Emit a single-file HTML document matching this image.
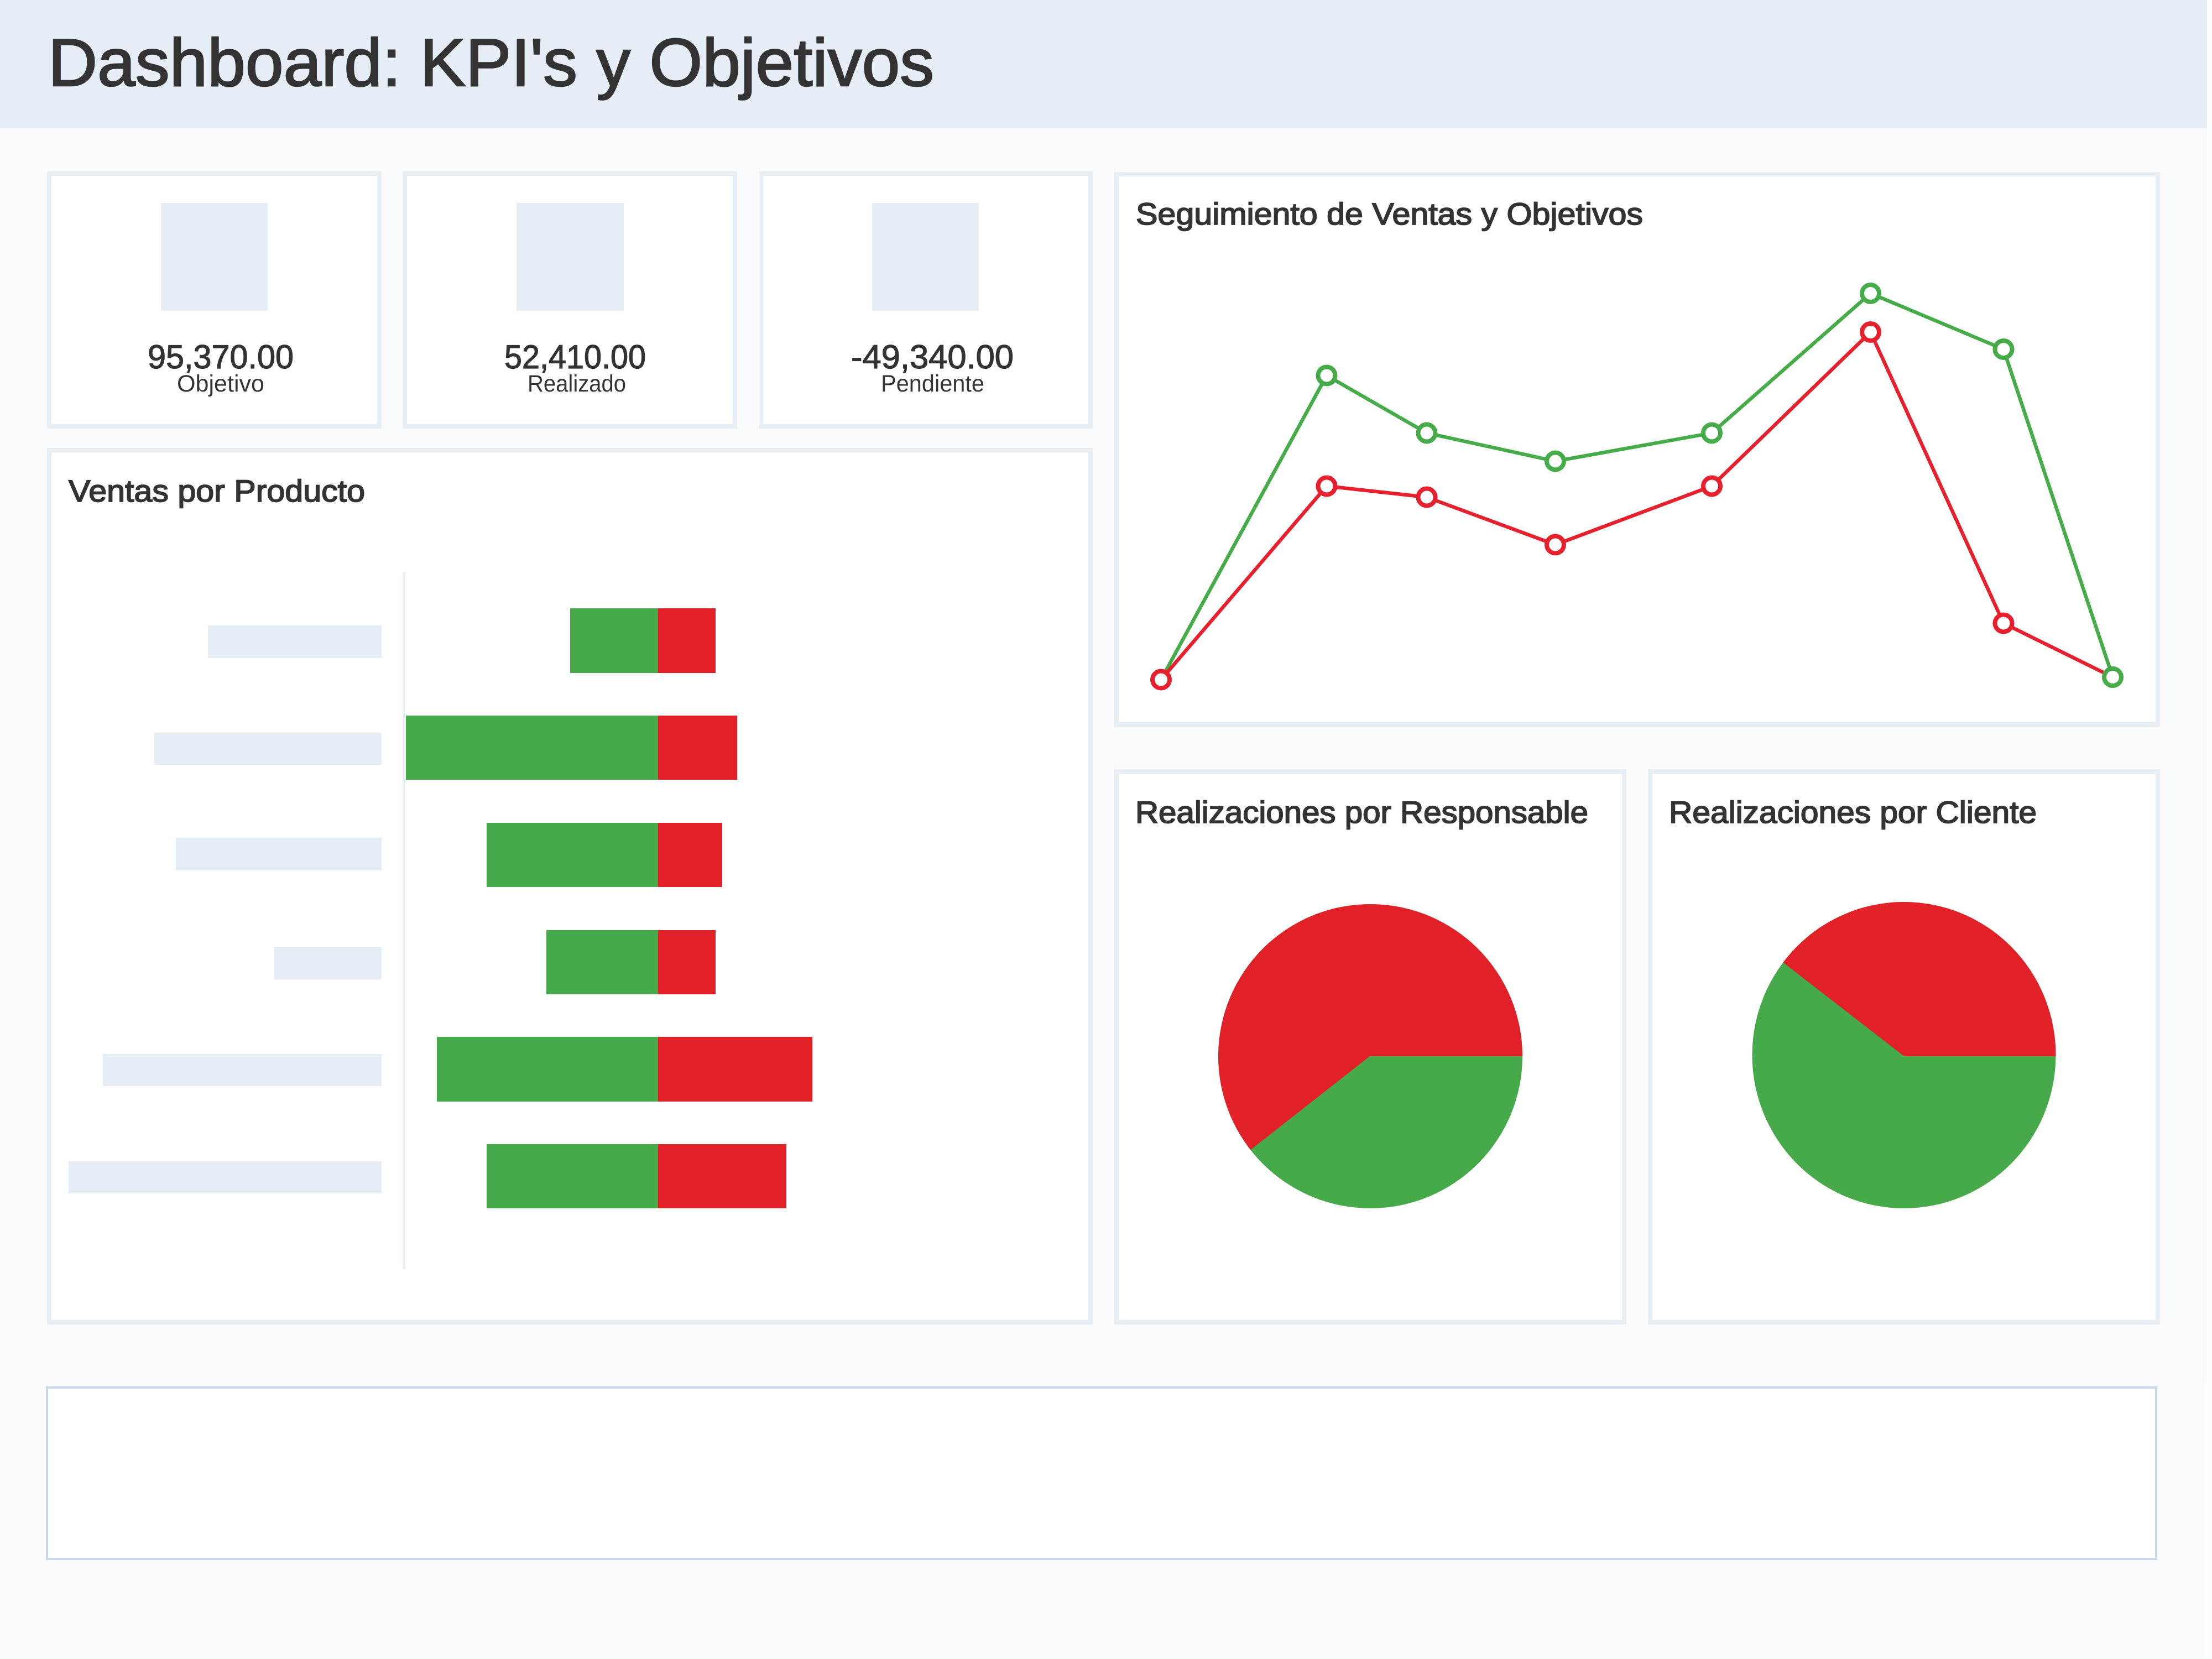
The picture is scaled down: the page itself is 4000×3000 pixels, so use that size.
<!DOCTYPE html>
<html lang="es"><head><meta charset="utf-8"><title>Dashboard: KPI's y Objetivos</title>
<style>
html,body{margin:0;padding:0;width:4000px;height:3000px;overflow:hidden;background:#fff}
svg{display:block;position:absolute;left:0;top:0}
text{font-family:"Liberation Sans",sans-serif;fill:#333}
.t{font-size:56px;stroke:#333;stroke-width:1.8px}
.n{font-size:60px;stroke:#333;stroke-width:1.2px}
.s{font-size:43px}
</style></head><body>
<svg width="4000" height="3000" viewBox="0 0 4000 3000" xmlns="http://www.w3.org/2000/svg">
<defs>
<clipPath id="p1"><circle cx="2478" cy="1910" r="275"/></clipPath>
<clipPath id="p2"><ellipse cx="3443" cy="1908" rx="274.5" ry="277"/></clipPath>
</defs>
<rect width="4000" height="3000" fill="#fdfeff"/>
<rect width="3991" height="3000" fill="#fbfcfe"/>
<rect y="232" width="3991" height="2267" fill="#f9fbfc"/>
<rect width="3991" height="232" fill="#e6edf4"/>
<text x="87" y="155" font-size="122" textLength="1602" lengthAdjust="spacingAndGlyphs" stroke="#333" stroke-width="2.5">Dashboard: KPI's y Objetivos</text>

<g fill="#fff" stroke="#e7eef4" stroke-width="8">
<rect x="89" y="314" width="597" height="457"/>
<rect x="732" y="314" width="597" height="457"/>
<rect x="1376" y="314" width="596" height="457"/>
<rect x="89" y="814" width="1883" height="1577"/>
<rect x="2019" y="315" width="1883" height="995"/>
<rect x="2019" y="1395" width="918" height="996"/>
<rect x="2984" y="1395" width="918" height="996"/>
</g>

<g fill="#e6edf4">
<rect x="291" y="367" width="193" height="195"/>
<rect x="934" y="367" width="194" height="195"/>
<rect x="1577" y="367" width="193" height="195"/>
</g>

<text class="n" x="267" y="666" textLength="264" lengthAdjust="spacingAndGlyphs">95,370.00</text>
<text class="n" x="912" y="666" textLength="256" lengthAdjust="spacingAndGlyphs">52,410.00</text>
<text class="n" x="1539" y="666" textLength="294" lengthAdjust="spacingAndGlyphs">-49,340.00</text>
<text class="s" x="320" y="708" textLength="158" lengthAdjust="spacingAndGlyphs">Objetivo</text>
<text class="s" x="954" y="708" textLength="178" lengthAdjust="spacingAndGlyphs">Realizado</text>
<text class="s" x="1593" y="708" textLength="187" lengthAdjust="spacingAndGlyphs">Pendiente</text>

<text class="t" x="124" y="907" textLength="536" lengthAdjust="spacingAndGlyphs">Ventas por Producto</text>
<text class="t" x="2054" y="406" textLength="917" lengthAdjust="spacingAndGlyphs">Seguimiento de Ventas y Objetivos</text>
<text class="t" x="2053" y="1488" textLength="819" lengthAdjust="spacingAndGlyphs">Realizaciones por Responsable</text>
<text class="t" x="3018" y="1488" textLength="665" lengthAdjust="spacingAndGlyphs">Realizaciones por Cliente</text>

<g fill="#e7edf4">
<rect x="376" y="1131" width="314" height="59"/>
<rect x="279" y="1325" width="411" height="58"/>
<rect x="318" y="1515" width="372" height="59"/>
<rect x="496" y="1713" width="194" height="58"/>
<rect x="186" y="1906" width="504" height="58"/>
<rect x="124" y="2100" width="566" height="58"/>
</g>
<rect x="728" y="1035" width="5" height="1260" fill="#ebf0f5"/>

<g fill="#47aa4a">
<rect x="1031" y="1100" width="159" height="117"/>
<rect x="734" y="1294" width="456" height="116"/>
<rect x="880" y="1488" width="310" height="116"/>
<rect x="988" y="1682" width="202" height="116"/>
<rect x="790" y="1875" width="400" height="117"/>
<rect x="880" y="2069" width="310" height="116"/>
</g>
<g fill="#e22028">
<rect x="1190" y="1100" width="104" height="117"/>
<rect x="1190" y="1294" width="143" height="116"/>
<rect x="1190" y="1488" width="116" height="116"/>
<rect x="1190" y="1682" width="104" height="116"/>
<rect x="1190" y="1875" width="279" height="117"/>
<rect x="1190" y="2069" width="232" height="116"/>
</g>

<polyline fill="none" stroke="#46ab49" stroke-width="6.5" points="2099.5,1229 2399,679 2580,783 2812.5,834 3095.5,783 3382.5,530.5 3623,631.5 3820.5,1224.5"/>
<polyline fill="none" stroke="#e7202e" stroke-width="6.5" points="2099.5,1229 2399,879 2580,899 2812.5,985 3095.5,879 3382.5,600.5 3623,1127 3820.5,1224.5"/>
<g fill="#fff" stroke="#e7202e" stroke-width="8">
<circle cx="2399" cy="879" r="15.5"/><circle cx="2580" cy="899" r="15.5"/><circle cx="2812.5" cy="985" r="15.5"/><circle cx="3095.5" cy="879" r="15.5"/><circle cx="3382.5" cy="600.5" r="15.5"/><circle cx="3623" cy="1127" r="15.5"/><circle cx="2099.5" cy="1229" r="15.5"/>
</g>
<g fill="#fff" stroke="#46ab49" stroke-width="8">
<circle cx="2399" cy="679" r="15.5"/><circle cx="2580" cy="783" r="15.5"/><circle cx="2812.5" cy="834" r="15.5"/><circle cx="3095.5" cy="783" r="15.5"/><circle cx="3382.5" cy="530.5" r="15.5"/><circle cx="3623" cy="631.5" r="15.5"/><circle cx="3820.5" cy="1224.5" r="15.5"/>
</g>

<circle cx="2478" cy="1910" r="275" fill="#47aa4a"/>
<polygon clip-path="url(#p1)" points="2477,1910 2800,1910 2800,1600 2100,1600 2100,2206" fill="#e22028"/>
<ellipse cx="3443" cy="1908" rx="274.5" ry="277" fill="#47aa4a"/>
<polygon clip-path="url(#p2)" points="3443,1910 3800,1910 3800,1500 3100,1500 3100,1644" fill="#e22028"/>

<rect x="85" y="2509" width="3814" height="310" fill="#fff" stroke="#c8d7ef" stroke-width="4"/>
</svg>
</body></html>
